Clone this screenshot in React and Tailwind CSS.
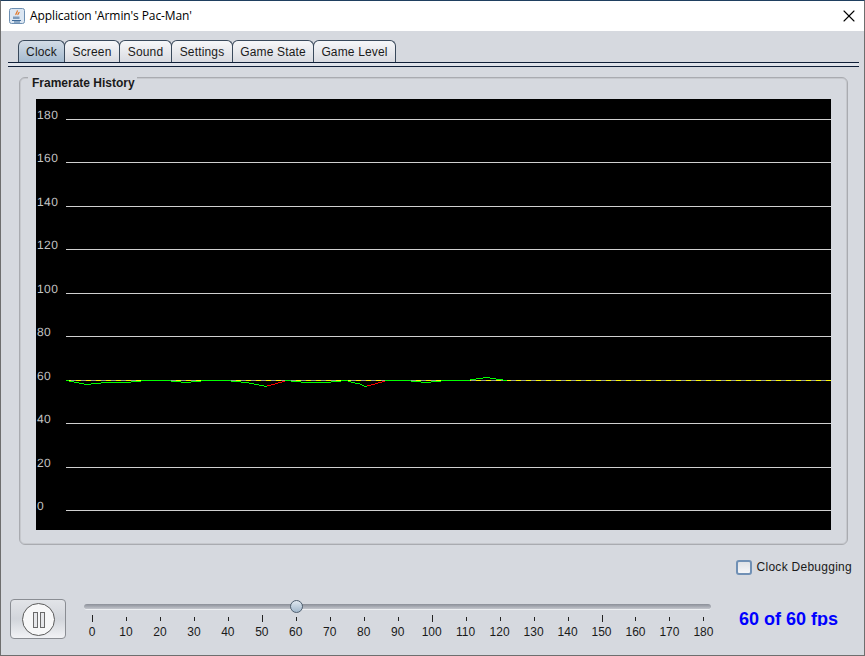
import React from 'react';
import { X } from 'lucide-react';

const TABS = ['Clock', 'Screen', 'Sound', 'Settings', 'Game State', 'Game Level'];
const TAB_WIDTHS = ['w-[47px]', 'w-[56px]', 'w-[53px]', 'w-[62px]', 'w-[82px]', 'w-[83px]'];

const GRID = [180, 160, 140, 120, 100, 80, 60, 40, 20, 0];
const GRID_Y = [20, 63, 107, 150, 194, 237, 281, 324, 368, 411];

// [x1, x2, y, color] in page coordinates, the trace around 60 fps
const G = '#00ff00';
const R = '#ff0000';
const TRACE = [
  [66, 69, 380, G], [69, 74, 381, G], [74, 79, 382, G], [79, 84, 383, G], [84, 91, 384, G],
  [91, 101, 383, G], [101, 131, 382, G], [131, 141, 381, G], [141, 171, 380, G],
  [171, 181, 381, G], [181, 191, 382, G], [191, 201, 381, G], [201, 231, 380, G],
  [231, 241, 381, G], [241, 249, 382, G], [249, 254, 383, G], [254, 259, 384, G], [259, 264, 385, G],
  [264, 267, 386, G], [267, 271, 385, R], [271, 275, 384, R], [275, 278, 383, R], [278, 282, 382, R], [282, 285, 381, R],
  [285, 291, 380, G], [291, 301, 381, G], [301, 331, 382, G], [331, 341, 381, G], [341, 348, 380, G],
  [348, 351, 381, G], [351, 355, 382, G], [355, 360, 383, G], [360, 362, 384, G], [362, 364, 385, G], [364, 367, 386, G],
  [367, 371, 385, R], [371, 375, 384, R], [375, 378, 383, R], [378, 382, 382, R], [382, 385, 381, R], [385, 411, 380, G],
  [411, 421, 381, G], [421, 431, 382, G], [431, 441, 381, G], [441, 470, 380, G],
  [470, 476, 379, G], [476, 483, 378, G], [483, 490, 377, G], [490, 496, 378, G], [496, 503, 379, G],
  [503, 507, 380, G],
];

const SLIDER_VALUES = Array.from({ length: 19 }, (_, i) => i * 10);

function JavaIcon() {
  return (
    <svg width="16" height="16" viewBox="0 0 16 16">
      <rect x="0.5" y="0.5" width="15" height="15" rx="2" fill="#dbe6f2" stroke="#6d8fb2" />
      <path d="M8 2.5c1.5 1.5-2 2.5-1 4.5M10 4c.5 1-1.5 1.5-1 3" fill="none" stroke="#e2711d" strokeWidth="1.2" />
      <path d="M4 8.5h6.5v2.5H4z" fill="#7d9bbb" />
      <path d="M3 12.5h9M5 14h6" stroke="#3d6a99" strokeWidth="1" />
    </svg>
  );
}

function Tab({ label, width, selected, first }) {
  return (
    <div
      className={`${width} ${first ? '' : '-ml-px'} h-[22px] flex items-center justify-center border border-b-0 border-[#39495b] rounded-t-[6px] text-[12px] tracking-[0.15px] text-[#1a1a1a] ${
        selected ? 'bg-gradient-to-b from-[#d3dce6] to-[#a5bbd0]' : 'bg-gradient-to-b from-[#f6f7f9] to-[#d9dbe1]'
      }`}
    >
      {label}
    </div>
  );
}

function FramerateChart() {
  return (
    <svg width="795" height="431" className="block bg-black" shapeRendering="crispEdges">
      {GRID.map((value, i) => (
        <g key={value}>
          <line x1="30" x2="795" y1={GRID_Y[i] + 0.5} y2={GRID_Y[i] + 0.5} stroke="#d0d0d0" />
          <text x="1" y={GRID_Y[i] - 0.5} fill="#c4c4c4" fontSize="12" fontFamily="Liberation Sans, sans-serif" letterSpacing="0.4" textRendering="geometricPrecision">
            {value}
          </text>
        </g>
      ))}
      <line x1="30" x2="795" y1="281.5" y2="281.5" stroke="#9a9a9a" />
      <line x1="30" x2="795" y1="281.5" y2="281.5" stroke="#ffff00" strokeDasharray="5 5" />
      {TRACE.map(([x1, x2, y, color]) => (
        <rect key={`${x1}-${y}`} x={x1 - 36} y={y - 99} width={x2 - x1} height="1" fill={color} />
      ))}
    </svg>
  );
}

function PauseButton() {
  return (
    <button className="w-[56px] h-[40px] flex items-center justify-center border border-[#8a8d93] rounded-[4px] bg-gradient-to-b from-[#e2e4e8] via-[#d2d5db] to-[#f1f2f5] shrink-0">
      <svg width="33" height="33" viewBox="0 0 33 33">
        <circle cx="16.5" cy="16.5" r="16" fill="#f7f7f8" stroke="#5a5a5a" />
        <rect x="11.5" y="9.5" width="4" height="15" fill="#e6e7ea" stroke="#6a6a6a" />
        <rect x="18.5" y="9.5" width="4" height="15" fill="#e6e7ea" stroke="#6a6a6a" />
      </svg>
    </button>
  );
}

function FpsSlider() {
  return (
    <div className="w-[646px]">
      <div className="relative ml-[9px] mr-[10px] h-[6px] rounded-full bg-gradient-to-b from-[#8b8f98] to-[#c3c6cd] border-b border-[#eef0f3]">
        <div className="absolute left-[206px] top-[-4px] w-[13px] h-[13px] rounded-full border border-[#4f5f70] bg-gradient-to-b from-[#dfe7ef] to-[#a3b8cc]" />
      </div>
      <div className="flex mt-[5px]">
        {SLIDER_VALUES.map((value) => (
          <div key={value} className="w-[33.97px] flex flex-col items-center">
            <div className="h-[7px] flex items-center">
              <div className={`w-px ml-px bg-[#222] ${value % 50 === 0 ? 'h-[7px]' : 'h-[4px]'}`} />
            </div>
            <span className="mt-[3px] text-[12px] leading-[14px] text-[#1a1a1a]">{value}</span>
          </div>
        ))}
      </div>
    </div>
  );
}

export default function App() {
  return (
    <div className="w-[865px] h-[656px] flex flex-col overflow-hidden border border-[#6e6e6e] border-t-[#1f3f60] bg-[#d6d9df] font-['Liberation_Sans',sans-serif]">
      {/* title bar */}
      <div className="h-[30px] shrink-0 bg-white flex items-center pl-[8px] pr-[5px]">
        <JavaIcon />
        <span className="ml-[5px] text-[12px] text-black font-['Open_Sans',sans-serif] tracking-[-0.1px]">
          Application 'Armin's Pac-Man'
        </span>
        <X size={20} strokeWidth={1.3} className="ml-auto text-black" />
      </div>

      {/* tabs */}
      <div className="flex pl-[17px] pt-[9px]">
        {TABS.map((tab, i) => (
          <Tab key={tab} label={tab} width={TAB_WIDTHS[i]} selected={i === 0} first={i === 0} />
        ))}
      </div>
      <div className="ml-[7px] mr-[5px] h-[5px] border-y border-[#101f38] bg-[#dfe3ea]" />

      {/* framerate group */}
      <div className="relative ml-[18px] mt-[10px] w-[829px] h-[468px] shrink-0 border border-[#a9abb0] shadow-[inset_0_0_0_1px_#c6c8cd] rounded-[6px] pl-[16px] pt-[21px]">
        <div className="absolute left-[8px] top-[-2px] pl-[4px] pr-[2px] h-[14px] bg-[#d6d9df] text-[12px] leading-[14px] font-bold text-[#1a1a1a]">
          Framerate History
        </div>
        <FramerateChart />
      </div>

      {/* debug checkbox */}
      <div className="flex items-center justify-end mt-[15px] pr-[12px]">
        <div className="w-[16px] h-[15px] rounded-[3px] border-2 border-[#7090b5] bg-gradient-to-b from-[#dfe2e7] to-[#f5f6f8]" />
        <span className="ml-[5px] text-[12px] leading-[15px] tracking-[0.27px] text-[#1a1a1a]">Clock Debugging</span>
      </div>

      {/* bottom controls */}
      <div className="flex items-start mt-[24px] pl-[9px]">
        <PauseButton />
        <div className="ml-[9px] mt-[5px]">
          <FpsSlider />
        </div>
        <div className="ml-[18px] mt-[10px] h-[17px] overflow-hidden text-[18px] leading-[20px] font-bold text-[#0000ff] whitespace-nowrap">
          60 of 60 fps
        </div>
      </div>
    </div>
  );
}
